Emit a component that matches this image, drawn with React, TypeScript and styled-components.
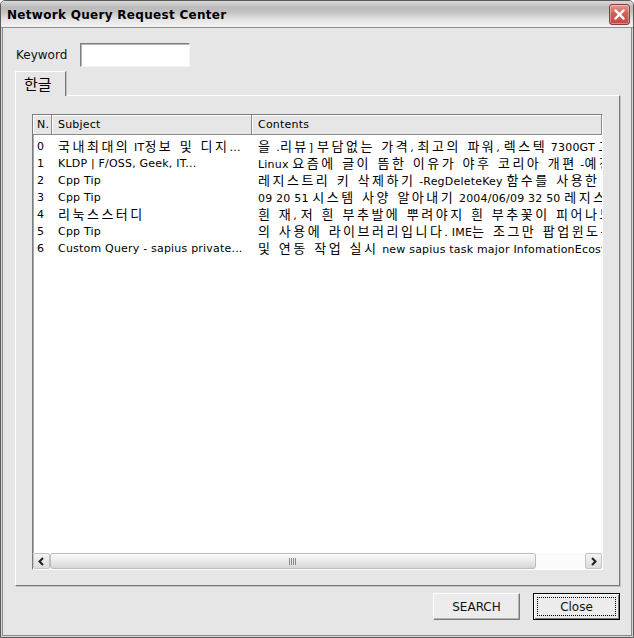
import React from 'react';
import styled, { createGlobalStyle } from 'styled-components';

const latin = `"DejaVu Sans", "Noto Sans CJK KR", sans-serif`;
const hangulFont = `"Noto Sans CJK KR", "DejaVu Sans", sans-serif`;

const GlobalStyle = createGlobalStyle`
  html, body {
    margin: 0;
    padding: 0;
    background: #ffffff;
  }
  * {
    box-sizing: border-box;
  }
`;

type Row = { subject: string; contents: string };

const rows: Row[] = [
  { subject: '국내최대의 IT정보 및 디지...', contents: '을 .리뷰] 부담없는 가격, 최고의 파워, 렉스텍 7300GT 그래픽카드 출시' },
  { subject: 'KLDP | F/OSS, Geek, IT...', contents: 'Linux 요즘에 글이 뜸한 이유가 야후 코리아 개편 -예정 작업' },
  { subject: 'Cpp Tip', contents: '레지스트리 키 삭제하기 -RegDeleteKey 함수를 사용한 방법' },
  { subject: 'Cpp Tip', contents: '09 20 51 시스템 사양 알아내기 2004/06/09 32 50 레지스트리' },
  { subject: '리눅스스터디', contents: '흰 재, 저 흰 부추발에 뿌려야지 흰 부추꽃이 피어나도록' },
  { subject: 'Cpp Tip', contents: '의 사용에 라이브러리입니다. IME는 조그만 팝업윈도우' },
  { subject: 'Custom Query - sapius private...', contents: '및 연동 작업 실시 new sapius task major InfomationEcosystem' },
];

// korean runs are drawn wider, like the gulim fallback does
const HANGUL_RUN = /([\u3130-\u318f\uac00-\ud7af]+(?:\s+[\u3130-\u318f\uac00-\ud7af]+)*)/;

const Mixed = ({ text }: { text: string }) => (
  <>
    {text.split(HANGUL_RUN).map((part, i) =>
      i % 2 === 1 ? <Hangul key={i}>{part}</Hangul> : <React.Fragment key={i}>{part}</React.Fragment>
    )}
  </>
);

const CloseGlyph = () => (
  <svg width="21" height="21" viewBox="0 0 21 21">
    <path d="M6 6 L15 15 M15 6 L6 15" stroke="#ffffff" strokeWidth="2.6" strokeLinecap="round" />
  </svg>
);

const Chevron = ({ dir }: { dir: 'left' | 'right' }) => (
  <svg width="9" height="9" viewBox="0 0 9 9">
    <path
      d={dir === 'left' ? 'M6 1 L2.5 4.5 L6 8' : 'M3 1 L6.5 4.5 L3 8'}
      stroke="#1e1e1e"
      strokeWidth="2"
      fill="none"
    />
  </svg>
);

const Grip = () => (
  <svg width="9" height="7" viewBox="0 0 9 7">
    <path d="M0.5 0 V7 M2.5 0 V7 M4.5 0 V7 M6.5 0 V7" stroke="#8a8a8a" strokeWidth="1" />
  </svg>
);

export default function App() {
  return (
    <>
      <GlobalStyle />
      <Window>
        <TitleBar>
          <Title>Network Query Request Center</Title>
          <CloseBox>
            <CloseGlyph />
          </CloseBox>
        </TitleBar>
        <Body>
          <KeywordRow>
            <Label>Keyword</Label>
            <TextInput />
          </KeywordRow>
          <TabStrip>
            <Tab>한글</Tab>
          </TabStrip>
          <TabPanel>
            <ListBox>
              <ListHeader>
                <HeaderCell $w={19} $pad={4}>N.</HeaderCell>
                <HeaderCell $w={200} $pad={6}>Subject</HeaderCell>
                <HeaderCell $pad={6}>Contents</HeaderCell>
              </ListHeader>
              <ListRows>
                {rows.map((row, i) => (
                  <ListRow key={i}>
                    <Cell $w={19} $pad={4}>{i}</Cell>
                    <Cell $w={200} $pad={6}><Mixed text={row.subject} /></Cell>
                    <Cell $pad={6}><Mixed text={row.contents} /></Cell>
                  </ListRow>
                ))}
              </ListRows>
              <HScroll>
                <ScrollArrow><Chevron dir="left" /></ScrollArrow>
                <Thumb $width={486}><Grip /></Thumb>
                <ScrollTrack />
                <ScrollArrow><Chevron dir="right" /></ScrollArrow>
              </HScroll>
            </ListBox>
          </TabPanel>
          <ButtonRow>
            <PushButton>SEARCH</PushButton>
            <PushButton $default>Close</PushButton>
          </ButtonRow>
        </Body>
      </Window>
    </>
  );
}

const Window = styled.div`
  width: 634px;
  height: 638px;
  display: flex;
  flex-direction: column;
  border: 1px solid #5a5a5a;
  border-radius: 5px 5px 0 0;
  background: #d6d6d6;
  overflow: hidden;
  font-family: ${latin};
  font-size: 11px;
  color: #000;
`;

const TitleBar = styled.div`
  height: 27px;
  flex-shrink: 0;
  display: flex;
  align-items: center;
  justify-content: space-between;
  padding: 0 3px 0 6px;
  background: linear-gradient(180deg, #d8d8d8 0%, #bababa 26%, #c4c4c4 45%, #e4e4e4 72%, #f3f3f3 100%);
  border-bottom: 1px solid #8e8e8e;
`;

const Title = styled.div`
  font-family: ${latin};
  font-weight: bold;
  font-size: 12px;
  letter-spacing: 0.3px;
  color: #000;
  margin-top: 1px;
`;

const CloseBox = styled.div`
  width: 21px;
  height: 21px;
  border-radius: 3px;
  border: 1px solid #8c3a3a;
  background: linear-gradient(180deg, #e69a92 0%, #cf5f58 45%, #c14a44 100%);
  box-shadow: inset 0 0 0 1px rgba(255, 255, 255, 0.35);
  display: flex;
  align-items: center;
  justify-content: center;
  margin-top: 1px;
`;

const Body = styled.div`
  flex: 1;
  display: flex;
  flex-direction: column;
  margin: 0 1px 1px;
  border: 1px solid #8a8a8a;
  border-top: none;
  background: #e6e6e6;
  padding: 15px 11px 15px 12px;
`;

const KeywordRow = styled.div`
  display: flex;
  align-items: center;
  height: 24px;
`;

const Label = styled.span`
  width: 65px;
  padding-left: 1px;
  font-size: 12px;
  color: #111;
`;

const TextInput = styled.div`
  width: 110px;
  height: 24px;
  background: #ffffff;
  border: 1px solid;
  border-color: #7e7e7e #f4f4f4 #f4f4f4 #7e7e7e;
  box-shadow: inset 1px 1px 0 #b4b4b4;
`;

const TabStrip = styled.div`
  display: flex;
  margin-top: 4px;
  margin-bottom: -1px;
  position: relative;
  z-index: 1;
`;

const Tab = styled.div`
  height: 25px;
  padding: 2px 13px 0 8px;
  font-family: ${hangulFont};
  font-size: 15px;
  line-height: 20px;
  background: #e6e6e6;
  border-top: 1px solid #ffffff;
  border-left: 1px solid #ffffff;
  border-right: 1px solid #7a7a7a;
  box-shadow: 1px 0 0 #bdbdbd;
`;

const TabPanel = styled.div`
  flex: 1;
  display: flex;
  flex-direction: column;
  padding: 18px 16px 15px 16px;
  border: 1px solid;
  border-color: #ffffff #7a7a7a #7a7a7a #ffffff;
  box-shadow: 1px 1px 0 #c2c2c2;
`;

const ListBox = styled.div`
  flex: 1;
  display: flex;
  flex-direction: column;
  background: #ffffff;
  border: 1px solid;
  border-color: #7c7c7c #ffffff #ffffff #7c7c7c;
  box-shadow: inset 1px 1px 0 #a8a8a8;
  overflow: hidden;
`;

const ListHeader = styled.div`
  display: flex;
  height: 20px;
  flex-shrink: 0;
  background: #e6e6e6;
  border-bottom: 1px solid #8a8a8a;
`;

const HeaderCell = styled.div<{ $w?: number; $pad: number }>`
  ${(p) => (p.$w ? `width: ${p.$w}px; flex-shrink: 0;` : 'flex: 1;')}
  padding-left: ${(p) => p.$pad}px;
  line-height: 19px;
  font-size: 11px;
  letter-spacing: 0.2px;
  border-right: 1px solid #8a8a8a;
  box-shadow: inset 1px 1px 0 #ffffff;
  white-space: nowrap;
  overflow: hidden;
`;

const ListRows = styled.div`
  flex: 1;
  padding-top: 3px;
  overflow: hidden;
`;

const ListRow = styled.div`
  display: flex;
  height: 17px;
  align-items: center;
  white-space: nowrap;
`;

const Cell = styled.div<{ $w?: number; $pad: number }>`
  ${(p) => (p.$w ? `width: ${p.$w}px; flex-shrink: 0;` : 'flex: 1; min-width: 0;')}
  padding-left: ${(p) => p.$pad}px;
  height: 17px;
  font-size: 11px;
  letter-spacing: 0.2px;
  line-height: 17px;
  overflow: hidden;
  white-space: nowrap;
`;

const Hangul = styled.span`
  font-family: ${hangulFont};
  font-size: 13px;
  line-height: 15px;
  letter-spacing: 2.5px;
  word-spacing: 1px;
`;

const HScroll = styled.div`
  display: flex;
  height: 16px;
  flex-shrink: 0;
  background: #f8f8f8;
`;

const ScrollArrow = styled.div`
  width: 17px;
  height: 16px;
  flex-shrink: 0;
  display: flex;
  align-items: center;
  justify-content: center;
  background: linear-gradient(180deg, #f4f4f4 0%, #dcdcdc 100%);
  border: 1px solid #c4c4c4;
  border-radius: 2px;
`;

const Thumb = styled.div<{ $width: number }>`
  width: ${(p) => p.$width}px;
  flex-shrink: 0;
  display: flex;
  align-items: center;
  justify-content: center;
  background: linear-gradient(180deg, #fafafa 0%, #ececec 45%, #d6d6d6 100%);
  border: 1px solid #bdbdbd;
  border-radius: 3px;
`;

const ScrollTrack = styled.div`
  flex: 1;
  background: #fbfbfb;
`;

const ButtonRow = styled.div`
  display: flex;
  justify-content: flex-end;
  gap: 13px;
  margin-top: 7px;
`;

const PushButton = styled.button<{ $default?: boolean }>`
  position: relative;
  width: 87px;
  height: 27px;
  padding: 0;
  font-family: ${latin};
  font-size: 12px;
  color: #111;
  background: #ececec;
  border: 1px solid;
  border-color: ${(p) => (p.$default ? '#000 #000 #000 #000' : '#ffffff #7a7a7a #7a7a7a #ffffff')};
  box-shadow: ${(p) => (p.$default ? 'inset 1px 1px 0 #fff, inset -1px -1px 0 #7a7a7a' : 'inset -1px -1px 0 #b4b4b4')};
  &::after {
    content: '';
    display: ${(p) => (p.$default ? 'block' : 'none')};
    position: absolute;
    inset: 3px;
    border: 1px dotted #000;
  }
`;
